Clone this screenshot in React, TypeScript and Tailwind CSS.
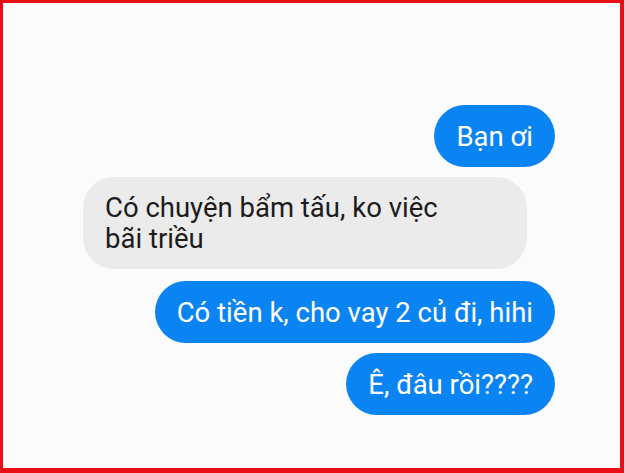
const messages = [
  { mine: true, text: "Bạn ơi", mt: "mt-0" },
  { mine: false, text: "Có chuyện bẩm tấu, ko việc bãi triều", mt: "mt-[10px]" },
  { mine: true, text: "Có tiền k, cho vay 2 củ đi, hihi", mt: "mt-[12px]" },
  { mine: true, text: "Ê, đâu rồi????", mt: "mt-[10px]" },
];

const App = () => {
  return (
    <div
      className="w-[624px] h-[473px] bg-[#fbfbfb] border-[#ea0f17] border-t-[3px] border-l-[3px] border-r-[4px] border-b-[5px] overflow-hidden"
      style={{ fontFamily: "Roboto, 'Noto Sans', sans-serif" }}
    >
      <div className="flex flex-col pt-[102px] pl-[80px] pr-[65px]">
        {messages.map((m, i) =>
          m.mine ? (
            <div key={i} className={`flex justify-end ${m.mt}`}>
              <div className="bg-[#0b84f3] text-white text-[27.5px] leading-[31px] px-[22px] py-[15.5px] rounded-full whitespace-nowrap">
                {m.text}
              </div>
            </div>
          ) : (
            <div key={i} className={`flex justify-start ${m.mt}`}>
              <div className="w-[444px] bg-[#ebebeb] text-[#1c1c1c] text-[27.5px] leading-[31px] pl-[22px] pr-[60px] py-[15px] rounded-[31px]">
                {m.text}
              </div>
            </div>
          )
        )}
      </div>
    </div>
  );
};

export default App;
